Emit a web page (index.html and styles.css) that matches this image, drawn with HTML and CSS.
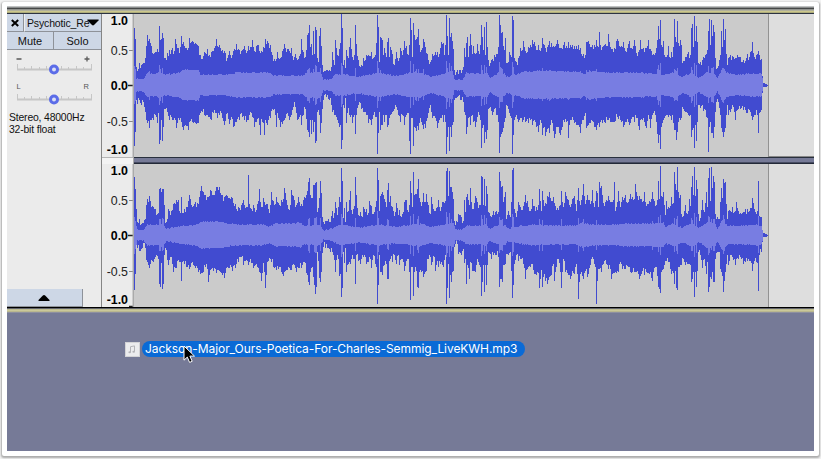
FILE: index.html
```html
<!DOCTYPE html>
<html lang="en">
<head>
<meta charset="utf-8">
<title>Audio editor</title>
<link rel="stylesheet" href="styles.css">
</head>
<body>
<div class="frame">
  <main class="workspace">
    <div class="edge-top"></div>
    <section class="track">
      <aside class="panel">
        <div class="row title-row">
          <button class="btn close" aria-label="Close"><svg width="8" height="8" viewBox="0 0 8 8"><path d="M.8 1 7.2 7M7.2 1 .8 7" stroke="#000" stroke-width="2"/></svg></button>
          <button class="btn name"><span>Psychotic_Re</span><svg width="12" height="7" viewBox="0 0 12 7"><path d="M.5.5h11q.5.4 0 1L7 6q-1 .9-2 0L.5 1.5q-.5-.6 0-1z"/></svg></button>
        </div>
        <div class="row mute-row">
          <button class="btn mute">Mute</button>
          <button class="btn solo">Solo</button>
        </div>
        <svg class="sliders" width="94" height="60" viewBox="7 50 94 60">
          <g stroke="#5a5a5a" stroke-width="1.3"><path d="M16.5 59h5M84.500 59h5M87 56.500v5"/></g>
          <g class="pan"><text x="16.500" y="88.500">L</text><text x="83.500" y="88.500">R</text></g>
          <g stroke="#c6c6c6" fill="none">
            <path stroke-width="2" d="M17 69.500h75M17 99.500h75"/>
            <path d="M17.500 64v5M24.500 67v2M31.500 66v3M39.500 67v2M46.500 66v3M61.500 66v3M68.500 67v2M76.500 66v3M83.500 67v2M91.500 64v5M17.500 94v5M24.500 97v2M31.500 96v3M39.500 97v2M46.500 96v3M61.500 96v3M68.500 97v2M76.500 96v3M83.500 97v2M91.500 94v5"/>
          </g>
          <g fill="#dce0f5" stroke="#5b6ce8" stroke-width="3"><circle cx="54" cy="69.500" r="3.500"/><circle cx="54" cy="99.500" r="3.500"/></g>
        </svg>
        <p class="info">Stereo, 48000Hz<br>32-bit float</p>
        <button class="btn collapse" aria-label="Collapse"><svg width="12" height="6" viewBox="0 0 12 6"><path d="M6 0q.7 0 1.400.7L11.500 5q.5 1-.5 1H1q-1 0-.5-1L4.600.7Q5.300 0 6 0z"/></svg></button>
      </aside>
      <div class="channels">
        <div class="channel first">
          <svg class="ruler" width="32" height="143" viewBox="102 14 32 143">
            <g><text class="b" x="128" y="25">1.0</text><text x="128" y="54.500">0.5</text><text class="b" x="128" y="90">0.0</text><text x="128" y="125.500">-0.5</text><text class="b" x="128" y="154">-1.0</text></g>
            <path stroke="#888" d="M129 50.500h4M129 121.500h4"/><path stroke="#222" stroke-width="1.500" d="M128 85.500h5"/>
            <path stroke="#aaa" stroke-width="1.500" d="M133.300 14v143"/>
          </svg>
          <svg class="wave" id="wave-left" width="634" height="143" viewBox="134 -71 634 143" shape-rendering="crispEdges"></svg>
          <div class="clip-end"></div>
        </div>
        <div class="gap"><div class="gap-ruler"></div><div class="gap-wave"></div></div>
        <div class="channel">
          <svg class="ruler" width="32" height="143" viewBox="102 164 32 143">
            <g><text class="b" x="128" y="175">1.0</text><text x="128" y="204.500">0.5</text><text class="b" x="128" y="240">0.0</text><text x="128" y="275.500">-0.5</text><text class="b" x="128" y="304">-1.0</text></g>
            <path stroke="#888" d="M129 200.500h4M129 271.500h4"/><path stroke="#222" stroke-width="1.500" d="M128 235.500h5M129 306.500h4"/>
            <path stroke="#aaa" stroke-width="1.500" d="M133.300 164v143"/>
          </svg>
          <svg class="wave" id="wave-right" width="634" height="143" viewBox="134 -70.5 634 143" shape-rendering="crispEdges"></svg>
          <div class="clip-end"></div>
        </div>
      </div>
    </section>
    <div class="edge-bottom"></div>
    <section class="drop-area">
      <div class="drag-item">
        <svg class="file-icon" width="15" height="15" viewBox="0 0 15 15"><rect x=".5" y=".5" width="14" height="14" fill="#ececee" stroke="#d3d3d6"/><path d="M5.500 10V4.700l4-.8v5.500" stroke="#b4b4b8" fill="none"/><ellipse cx="4.700" cy="10.300" rx="1.300" ry="1" fill="#b4b4b8"/><ellipse cx="8.700" cy="9.700" rx="1.300" ry="1" fill="#b4b4b8"/></svg>
        <span class="file-name">Jackson-Major_Ours-Poetica-For-Charles-Semmig_LiveKWH.mp3</span>
        <svg class="cursor" width="13" height="19" viewBox="0 0 13 19"><path d="M1 1v14.200l3.300-3.100 2.300 5.300 2.600-1.100-2.300-5.200h4.600z" fill="#000" stroke="#fff"/></svg>
      </div>
    </section>
  </main>
</div>
<script src="wave.js"></script>
</body>
</html>
```
FILE: styles.css
```css
* { box-sizing: border-box; }
body { margin: 0; background: #f3f3f3; font-family: "Liberation Sans", Arial, sans-serif; color: #111; width: 821px; height: 459px; overflow: hidden; padding: 2px 2px 3px; }
.frame { height: 454px; width: 817px; background: #fff; padding: 4px 4px 5px 5px; border-radius: 2px; box-shadow: 0 1px 2px 1px #aaa; }
.workspace { width: 807px; height: 445px; background: #767a97; display: flex; flex-direction: column; }
.edge-top { height: 8px; flex: none; background: linear-gradient(#c0c2c2 0 1px, #8a8c8c 1px 2px, #454747 2px 3px, #929490 3px 4px, #b1b09b 4px 5px, #cbc78c 5px 6px, #aeac7c 6px 7px, #2c3342 7px); }
.track { display: flex; height: 293px; flex: none; }
.panel { width: 95px; background: #ebebeb; border-right: 1px solid #858585; display: flex; flex-direction: column; align-items: flex-start; }
.row { display: flex; width: 94px; }
.btn { margin: 0; padding: 0; border: 0 solid #8e9299; border-right-width: 1px; border-bottom-width: 1px; background: #cdd7e6; font: 11px/16px "Liberation Sans", Arial, sans-serif; color: #111; display: flex; align-items: center; justify-content: center; }
.title-row { height: 18px; }
.close { width: 17px; }
.name { width: 77px; border-left: 1px solid #eee; justify-content: flex-start; padding-left: 2px; border-right: 0; }
.name span { width: 60px; white-space: nowrap; font-size: 10.5px; letter-spacing: -.15px; }
.name svg { flex: none; }
.mute-row { height: 18px; }
.mute { width: 47px; }
.solo { width: 47px; border-right: 0; }
.sliders { display: block; flex: none; }
.pan { font-size: 7.5px; fill: #555; }
.info { margin: 2px 0 0 2px; font-size: 10.4px; letter-spacing: -.17px; line-height: 12px; white-space: nowrap; }
.collapse { margin-top: auto; width: 76px; height: 18px; padding-right: 2px; }
.channels { width: 712px; display: flex; flex-direction: column; }
.channel { display: flex; height: 143px; background: #dedede; }
.ruler { display: block; background: #ebebeb; flex: none; font-size: 12.4px; text-anchor: end; fill: #222; }
.b { font-weight: bold; fill: #000; }
.wave { display: block; flex: none; background: #cbcbcb; }
.clip-end { width: 1px; background: #929292; }
.first { border-bottom: 1px solid #888; }
.gap { height: 7px; display: flex; }
.gap-ruler { width: 32px; background: linear-gradient(#b5b5b5 0 1px, #f3f3f3 1px); border-right: 1px solid #aaa; }
.gap-wave { flex: 1; background: linear-gradient(#29303d 0 1px, #767a97 1px 5px, #474c62 5px 6px, #232938 6px); }
.edge-bottom { height: 6px; flex: none; background: linear-gradient(#000 0 1px, #62646b 1px 2px, #bdbb91 2px 3px, #cbc89a 3px 4px, #b9b78f 4px 5px, #8e90a0 5px); }
.drop-area { flex: 1; padding: 28px 0 0 118px; }
.drag-item { display: flex; position: relative; align-items: center; height: 16px; gap: 2px; }
.file-name { height: 16px; width: 383px; border-radius: 8px; background: #0a6ad6; color: #fff; font: 12px/16px Inter, "Liberation Sans", sans-serif; letter-spacing: -.06px; padding-left: 3px; white-space: nowrap; }
.cursor { position: absolute; left: 58px; top: 4px; }
```
FILE: wave.js
```js
// Peaks as "x up down" triples, in pixels from each channel's centre line.
const LEFT = `134 57 61,135 46 47,136 18 15,137 14 19,139 22 15,141 20 20,143 22 17,145 27 27,146 39 35,147 50 38,149 46 43,151 39 35,153 31 35,155 33 30,157 36 38,158 33 28,159 59 59,160 45 55,161 46 35,162 52 56,163 47 42,164 27 24,166 25 23,167 32 27,169 35 35,170 31 30,172 37 35,174 34 33,175 46 35,176 41 43,178 37 33,179 32 35,181 49 37,183 43 45,186 37 41,188 37 45,189 47 37,192 44 37,195 42 38,198 39 38,200 30 28,202 26 27,204 33 30,207 36 30,209 30 32,211 33 35,213 34 28,216 46 28,217 39 33,219 40 30,221 34 28,224 34 40,227 27 28,229 34 39,231 27 32,233 34 42,236 41 37,239 35 35,242 35 32,244 39 35,246 32 37,248 39 35,250 38 27,252 45 32,254 34 42,256 39 37,258 40 33,260 32 50,261 34 34,263 38 38,264 37 50,265 46 35,267 44 40,270 40 33,272 30 24,275 24 30,276 26 42,277 33 28,280 27 42,284 41 35,287 36 28,289 34 35,291 37 30,293 25 22,295 31 22,297 25 35,300 31 30,301 46 40,303 33 30,305 28 24,307 50 45,308 52 47,309 60 52,310 38 35,311 41 49,312 30 35,313 54 47,314 31 37,315 58 58,316 55 56,317 27 27,318 23 25,319 49 30,320 57 48,321 39 38,322 20 24,323 13 15,326 15 12,329 15 15,331 18 20,332 33 27,334 20 30,335 45 30,337 30 35,339 36 42,340 42 40,341 71 64,342 57 55,343 20 20,344 25 23,345 17 13,346 35 38,348 27 23,349 38 30,350 47 32,352 28 38,354 30 30,355 60 49,356 41 30,358 25 20,361 20 24,363 27 27,366 30 30,368 30 38,371 33 40,373 27 30,375 30 32,376 42 32,377 70 69,378 58 48,379 23 27,380 48 45,382 45 40,383 30 30,384 37 37,386 28 30,387 43 42,388 47 40,389 28 33,390 38 30,392 31 27,394 20 24,396 33 22,398 24 30,400 37 37,402 30 30,404 44 40,406 39 30,408 30 28,409 40 56,410 67 69,411 55 33,412 28 33,413 62 61,414 50 42,416 46 46,418 56 45,419 40 38,421 35 37,423 46 44,425 38 43,427 31 33,430 23 20,432 31 33,435 33 33,437 33 43,439 31 35,441 43 33,443 42 37,444 30 30,445 40 37,446 70 69,447 49 52,448 30 42,449 67 66,450 48 42,451 52 52,452 44 40,453 36 37,454 15 15,457 15 12,460 15 15,463 18 17,464 37 27,465 28 30,466 42 49,467 48 42,468 28 33,470 51 40,472 31 30,473 39 37,475 31 42,477 41 32,479 31 30,480 40 35,481 60 63,482 48 43,483 35 40,484 58 58,485 30 47,486 63 54,487 38 45,488 25 24,490 22 22,492 26 30,494 30 24,496 31 30,498 38 37,499 70 68,500 60 52,501 52 49,502 53 47,503 39 43,504 35 37,505 47 33,506 22 20,508 23 24,509 33 28,511 28 33,512 69 69,513 65 50,514 27 35,516 23 30,518 27 37,520 37 33,522 35 37,523 44 35,525 34 37,528 38 38,530 40 35,532 45 40,534 43 35,536 35 42,538 40 47,540 34 35,542 47 50,544 40 42,545 37 51,547 38 44,549 44 48,551 42 35,554 38 53,557 45 42,560 37 50,562 36 42,564 43 37,567 37 36,568 43 53,570 40 35,574 39 38,578 40 40,580 37 48,583 31 35,585 30 28,586 43 43,588 44 40,591 38 35,594 40 42,596 45 45,598 38 38,599 53 42,600 40 37,602 38 38,605 41 38,607 39 35,608 51 35,610 38 37,614 37 37,617 46 32,620 38 35,623 43 42,625 34 37,629 44 40,632 36 32,634 45 37,636 32 33,639 35 45,640 45 35,642 36 35,646 37 43,648 45 30,650 36 43,653 31 28,656 37 37,657 45 49,658 59 58,659 46 50,660 65 64,661 40 42,663 44 35,664 30 33,666 28 30,668 39 32,669 28 30,671 33 35,672 28 30,673 38 38,674 66 45,675 48 45,676 43 55,677 64 47,678 42 37,680 45 35,681 40 33,682 22 22,685 28 27,688 33 30,690 30 30,691 57 52,692 61 45,693 38 43,694 69 63,695 44 40,696 59 56,697 43 37,698 22 20,700 23 23,703 28 26,706 31 32,707 35 33,708 54 67,709 66 42,710 40 37,711 65 48,712 49 48,713 60 53,714 53 42,715 27 27,716 16 17,718 19 17,720 30 30,721 54 43,722 38 47,723 66 52,724 45 47,725 56 43,726 31 30,727 20 20,728 27 30,730 30 27,733 28 22,735 27 35,737 30 25,740 28 24,741 23 23,743 25 25,747 31 28,749 28 25,752 43 35,754 28 30,757 31 30,758 34 48,759 30 28,761 26 25,762 9 8,763 2 2,765 1 2,767 0 1`;
const RIGHT = `134 58 55,135 46 39,136 26 10,137 13 13,139 16 16,142 12 13,145 16 13,146 30 25,147 36 27,149 39 33,151 28 25,153 28 27,155 26 22,157 21 21,158 22 24,159 46 49,160 47 52,161 43 28,162 46 54,163 46 49,164 30 20,165 12 13,168 26 30,170 20 22,173 31 37,176 35 33,178 35 25,180 22 27,181 38 46,182 22 27,186 28 32,189 40 34,192 28 27,195 33 33,198 31 37,200 44 39,201 49 38,203 43 37,205 40 32,207 38 34,208 38 47,210 45 35,213 40 36,216 48 38,219 48 36,221 40 38,224 38 43,226 40 33,229 37 33,232 37 36,235 31 33,238 28 27,241 30 22,243 35 30,246 28 25,247 28 26,248 60 30,249 31 27,251 26 28,253 30 33,255 23 30,257 31 32,259 46 37,261 28 46,263 37 28,265 30 53,267 31 27,269 22 23,271 43 27,274 30 33,276 38 35,279 30 32,281 35 37,283 36 41,284 47 37,287 30 35,290 30 35,291 45 35,294 35 30,296 30 37,298 38 33,301 31 33,304 38 27,306 40 38,308 53 47,309 57 50,310 40 37,312 37 32,313 50 42,315 52 59,316 53 52,317 23 17,319 37 43,320 54 47,321 42 37,322 18 18,323 13 12,328 16 13,330 13 17,332 24 17,333 17 20,335 33 37,337 20 20,338 28 24,339 38 41,340 33 39,341 67 62,342 54 53,343 17 17,344 27 28,345 13 13,346 33 37,347 23 30,349 35 27,350 44 29,351 25 24,353 26 24,354 29 24,355 58 49,356 40 20,358 20 26,360 23 29,362 18 20,363 28 22,366 26 29,368 22 27,369 34 22,371 29 33,373 21 20,375 28 29,376 34 32,377 67 69,378 55 50,379 24 20,380 39 37,382 43 40,384 36 30,386 28 29,387 45 44,388 52 44,389 33 26,390 39 24,392 28 27,394 19 20,396 32 29,398 20 20,399 25 30,402 21 24,404 33 36,406 35 26,408 23 24,409 30 37,410 54 65,411 42 32,412 28 32,413 63 61,414 40 37,416 41 36,417 46 52,418 56 53,419 37 37,421 29 37,423 42 42,425 33 37,426 41 36,427 33 24,430 21 22,431 38 30,434 24 22,435 24 36,437 28 26,438 35 32,440 24 29,442 33 30,443 33 32,445 34 20,446 64 69,447 67 53,448 39 29,449 64 63,450 48 40,451 48 47,452 43 37,453 36 36,454 14 12,457 13 9,458 21 19,461 18 20,463 14 14,464 35 28,465 23 24,466 38 49,467 41 30,469 30 44,470 47 27,472 26 36,475 39 37,477 33 24,479 30 30,480 30 32,481 59 61,482 58 47,483 30 30,484 56 57,485 29 30,486 49 50,487 41 30,488 23 17,491 18 24,493 24 20,496 24 20,498 23 22,499 63 52,500 54 44,501 48 44,502 49 47,503 33 30,505 43 29,506 16 19,508 24 20,510 18 17,511 33 36,512 65 63,513 67 50,514 26 29,516 18 20,518 33 26,520 28 24,523 29 29,525 40 44,527 34 34,530 24 32,532 36 29,534 29 39,536 28 40,538 30 38,539 46 53,541 24 35,542 44 52,544 29 39,545 32 46,547 39 49,549 43 42,551 34 40,553 38 29,554 32 46,557 27 24,560 30 37,561 44 53,563 28 24,565 43 37,568 35 40,570 28 44,572 36 36,574 39 39,576 24 29,577 35 39,578 47 64,580 30 39,583 51 44,585 31 36,587 40 42,590 31 30,592 45 22,594 28 29,595 34 32,596 44 69,597 42 46,598 28 34,599 53 34,601 49 37,603 32 29,606 35 29,608 39 34,610 33 34,611 33 44,613 35 38,614 53 38,615 24 37,618 44 37,620 28 27,622 38 34,625 40 34,628 33 32,630 41 37,632 38 37,634 36 37,635 51 37,637 39 36,639 39 44,642 33 36,644 43 40,646 29 37,649 34 39,652 43 46,655 29 32,657 35 41,658 54 52,659 36 54,660 69 58,661 39 37,663 43 34,665 20 26,666 34 26,668 28 27,670 29 34,671 38 39,672 31 36,673 32 38,674 63 49,675 51 36,676 45 53,677 68 55,678 43 32,680 40 30,681 21 30,683 19 24,685 30 30,687 21 29,689 36 29,690 29 30,691 48 47,692 59 44,693 40 37,694 68 62,695 39 37,696 55 52,697 46 36,698 21 17,700 17 20,702 35 33,704 23 24,706 43 39,707 28 27,708 57 57,709 67 52,710 34 42,711 68 44,712 47 37,713 59 47,714 53 47,715 21 24,717 18 17,719 16 17,720 33 34,721 47 37,722 37 41,723 56 57,724 52 46,725 53 37,726 31 29,727 16 20,728 24 30,730 24 20,732 28 22,735 24 30,736 33 24,738 24 24,741 21 24,743 23 29,745 26 27,747 26 26,750 27 26,752 37 36,754 26 26,757 24 28,758 54 56,759 19 20,761 18 17,762 5 7,763 2 2,766 1 2,767 0 1`;
// Average level as "x level" pairs.
const LEFT_RMS = `134 17,136 6,143 6,147 12,156 11,159 13,164 10,178 12,182 15,198 15,200 10,205 10,225 10,236 12,270 12,273 9,302 9,306 12,320 13,323 5,331 6,335 11,346 10,356 8,363 9,377 12,395 9,409 12,420 12,430 8,446 12,452 14,454 5,462 5,466 12,480 11,487 12,489 7,498 12,504 11,506 8,518 11,522 13,545 14,570 13,580 13,584 10,589 14,605 12,640 12,656 11,664 10,673 12,682 8,691 12,698 7,708 13,715 10,717 6,722 16,726 12,735 10,750 11,761 11,762 6,763 1,767 0`;
const RIGHT_RMS = `134 18,137 5,143 5,147 10,158 10,162 12,166 6,180 9,195 10,201 13,220 13,229 11,240 10,263 10,268 8,275 11,300 12,304 9,320 10,323 4,331 6,340 10,359 7,368 9,380 10,395 8,405 9,420 11,430 8,445 10,453 12,455 5,461 5,466 9,480 9,486 11,489 6,498 9,505 10,507 6,515 8,530 10,575 9,582 12,593 10,615 10,623 11,650 11,663 12,665 8,673 11,682 7,691 12,698 7,708 13,715 10,717 6,722 15,727 9,740 9,757 10,761 9,762 5,763 1,767 0`;

const parse = text => text.split(',').map(item => item.trim().split(' ').map(Number));

function sample(points, x, column) {
  const next = points.findIndex(p => p[0] >= x);
  const b = points[next];
  if (b[0] === x || next === 0) return b[column];
  const a = points[next - 1];
  return a[column] + (b[column] - a[column]) * (x - a[0]) / (b[0] - a[0]);
}

function draw(id, peakText, rmsText) {
  const peaks = parse(peakText), levels = parse(rmsText);
  const known = new Set(peaks.map(p => p[0]));
  let seed = 17, outer = '', inner = '';
  const noise = () => ((seed = seed * 16807 % 2147483647) / 2147483647);
  for (let x = 134; x < 768; x++) {
    let up = sample(peaks, x, 1), down = sample(peaks, x, 2);
    if (!known.has(x) && x < 762) { up -= noise() * 6 - 1; down -= noise() * 6 - 1; }
    up = Math.max(0, Math.round(up));
    down = Math.max(1, Math.round(down));
    let level = sample(levels, x, 1);
    const spike = Math.min(up, down);
    if (spike > 42 && level > 7) level = Math.max(level, spike * .34);
    const top = Math.min(up, Math.round(level + noise() * 1.4 - .5));
    const bottom = Math.min(down, Math.round(level + noise() * 1.4 - .5));
    outer += `M${x} ${-up}h1V${down}h-1z`;
    if (x < 763) inner += `M${x} ${-top}h1V${bottom}h-1z`;
  }
  document.getElementById(id).innerHTML = `<path fill="#414bd0" d="${outer}"/><path fill="#787de2" d="${inner}"/>`;
}
draw('wave-left', LEFT, LEFT_RMS);
draw('wave-right', RIGHT, RIGHT_RMS);
```
